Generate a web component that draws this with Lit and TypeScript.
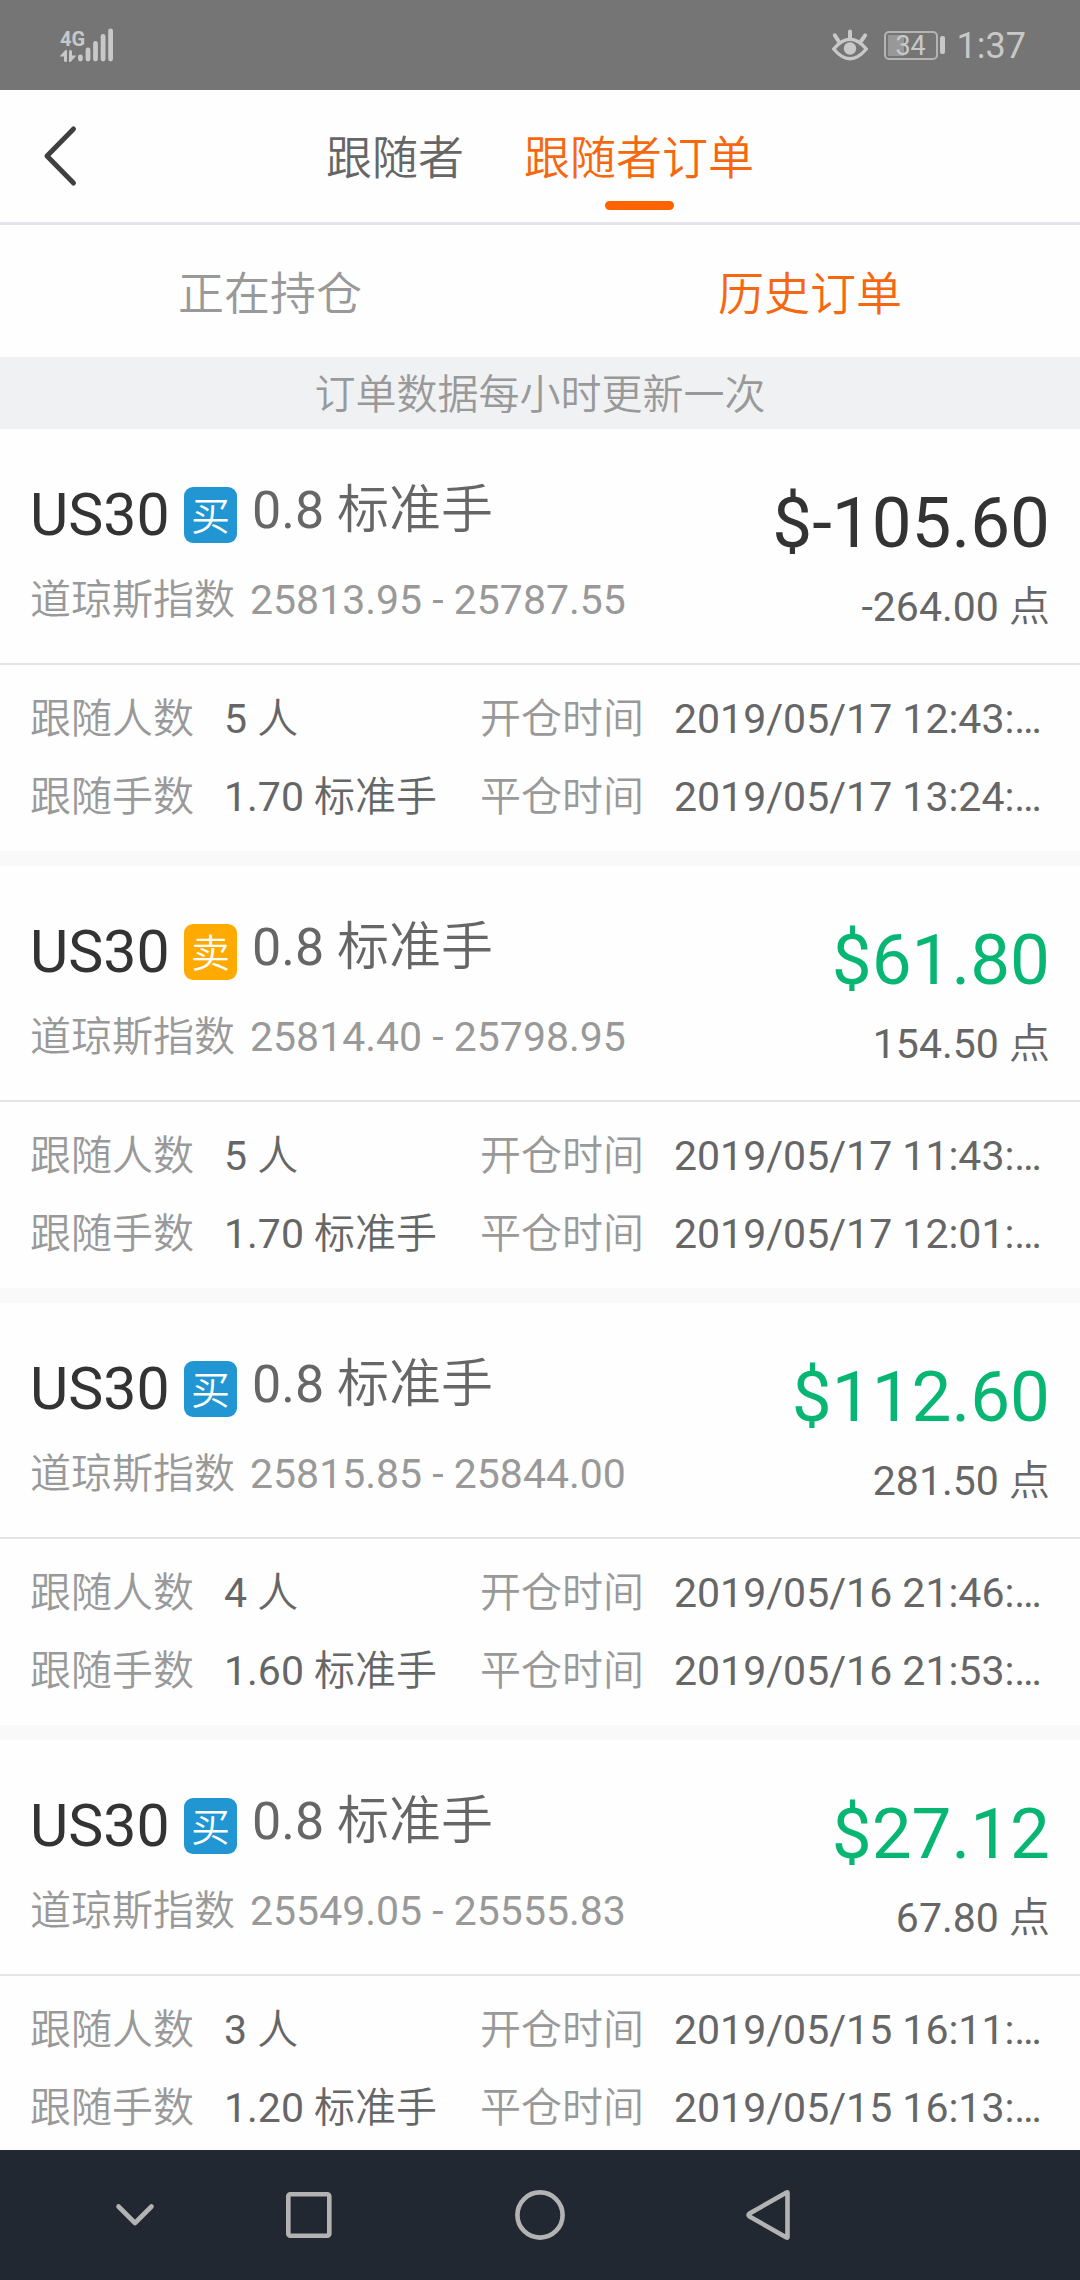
import { LitElement, html, css, svg } from "lit";
import { customElement, property, state } from "lit/decorators.js";
import { classMap } from "lit/directives/class-map.js";

interface Order {
  symbol: string;
  side: "buy" | "sell";
  lots: string;
  name: string;
  range: string;
  profit: string;
  points: string;
  followers: string;
  followLots: string;
  opened: string;
  closed: string;
}

const ORDERS: Order[] = [
  {
    symbol: "US30", side: "buy", lots: "0.8 标准手", name: "道琼斯指数",
    range: "25813.95 - 25787.55", profit: "$-105.60", points: "-264.00 点",
    followers: "5 人", followLots: "1.70 标准手",
    opened: "2019/05/17 12:43:…", closed: "2019/05/17 13:24:…",
  },
  {
    symbol: "US30", side: "sell", lots: "0.8 标准手", name: "道琼斯指数",
    range: "25814.40 - 25798.95", profit: "$61.80", points: "154.50 点",
    followers: "5 人", followLots: "1.70 标准手",
    opened: "2019/05/17 11:43:…", closed: "2019/05/17 12:01:…",
  },
  {
    symbol: "US30", side: "buy", lots: "0.8 标准手", name: "道琼斯指数",
    range: "25815.85 - 25844.00", profit: "$112.60", points: "281.50 点",
    followers: "4 人", followLots: "1.60 标准手",
    opened: "2019/05/16 21:46:…", closed: "2019/05/16 21:53:…",
  },
  {
    symbol: "US30", side: "buy", lots: "0.8 标准手", name: "道琼斯指数",
    range: "25549.05 - 25555.83", profit: "$27.12", points: "67.80 点",
    followers: "3 人", followLots: "1.20 标准手",
    opened: "2019/05/15 16:11:…", closed: "2019/05/15 16:13:…",
  },
];

@customElement("status-bar")
export class StatusBar extends LitElement {
  static styles = css`
    :host {
      display: flex;
      align-items: center;
      height: 90px;
      padding: 0 54px 0 60px;
      box-sizing: border-box;
      background: #757575;
      color: #c8c8c8;
    }
    .network {
      display: flex;
      align-items: flex-end;
      gap: 1px;
      margin-right: auto;
    }
    .generation {
      display: flex;
      flex-direction: column;
      gap: 2px;
      width: 17px;
    }
    .label {
      font: 700 20px/18px "Liberation Sans Narrow", Roboto, sans-serif;
    }
    .icon {
      display: block;
      fill: currentColor;
    }
    .eye {
      margin-right: 16px;
    }
    .battery {
      display: flex;
      align-items: center;
      gap: 2px;
      margin-right: 12px;
    }
    .cell {
      box-sizing: border-box;
      width: 54px;
      height: 29px;
      padding: 2px;
      border: 2px solid #b4b4b4;
      border-radius: 5px;
      font-size: 27px;
      line-height: 22px;
      text-align: center;
      background: linear-gradient(90deg, #989898 34%, transparent 34%) content-box;
    }
    .tip {
      width: 5px;
      height: 18px;
      border-radius: 2px;
      background: currentColor;
    }
    .time {
      padding-top: 2px;
      font-size: 36px;
      line-height: 44px;
    }
  `;

  render() {
    return html`
      <div class="network">
        <div class="generation">
          <span class="label">4G</span>
          <svg class="icon" width="17" height="12" viewBox="0 0 17 12">
            <path d="M0 6 5 0.6Q7 -1 7 1V10.500Q7 12 5.500 12Q4 12 4 10.500V6.500H1Q-0.500 6.500 0 6Z"></path>
            <path d="M16 6 11 11.400Q9 13 9 11V1.500Q9 0 10.500 0Q12 0 12 1.500V5.500H15.500Q16.500 5.500 16 6Z"></path>
          </svg>
        </div>
        <svg class="icon" width="35" height="34" viewBox="0 0 35 34">
          <rect x="0" y="26.500" width="4.800" height="7" rx="2.400"></rect>
          <rect x="7.600" y="19.500" width="4.800" height="14" rx="2.400"></rect>
          <rect x="15.100" y="13" width="4.800" height="20.500" rx="2.400"></rect>
          <rect x="22.700" y="6" width="4.800" height="27.500" rx="2.400"></rect>
          <rect x="30.200" y="0.400" width="4.800" height="33.100" rx="2.400"></rect>
        </svg>
      </div>
      <svg class="icon eye" width="36" height="32" viewBox="0 0 36 32">
        <g fill="none" stroke="currentColor" stroke-linecap="round">
          <path d="M1.700 20Q18 0.600 34.300 20Q18 39.400 1.700 20Z" stroke-width="3.400" stroke-linejoin="round"></path>
          <path d="M18 2.500V9M2.800 6.300 6.300 11.800M33.200 6.300 29.300 11.800" stroke-width="4"></path>
        </g>
        <circle cx="18" cy="19.500" r="6.200"></circle>
      </svg>
      <div class="battery">
        <div class="cell">34</div>
        <div class="tip"></div>
      </div>
      <div class="time">1:37</div>
    `;
  }
}

@customElement("order-card")
export class OrderCard extends LitElement {
  @property({ attribute: false }) order!: Order;

  static styles = css`
    :host {
      display: block;
      background: #fefefe;
      color: #666;
      font-size: 41px;
      line-height: 48px;
      white-space: nowrap;
    }
    .summary {
      display: flex;
      justify-content: space-between;
      align-items: flex-start;
      padding: 56px 30px 32px;
      border-bottom: 2px solid #e4e4e6;
    }
    .title {
      display: grid;
      grid-template-columns: 139px 53px auto;
      column-gap: 15px;
      align-items: center;
      margin-bottom: 31px;
    }
    .symbol {
      margin: 0;
      font-size: 59px;
      line-height: 60px;
      font-weight: 400;
      color: #333;
    }
    .side {
      box-sizing: border-box;
      height: 56px;
      border-radius: 9px;
      font-size: 39px;
      font-weight: 300;
      line-height: 60px;
      text-align: center;
      color: #fff;
    }
    .buy {
      background: #2196d3;
    }
    .sell {
      background: #ffaa00;
    }
    .lots {
      align-self: start;
      font-size: 52px;
      line-height: 52px;
    }
    .instrument {
      display: flex;
      gap: 15px;
      color: #999;
    }
    .name {
      font-weight: 300;
    }
    .result {
      text-align: right;
    }
    .profit {
      margin-bottom: 22px;
      font-size: 71px;
      line-height: 76px;
      color: #08b674;
    }
    .loss {
      color: #333;
    }
    .details {
      display: grid;
      grid-template-columns: 450fr 570fr;
      row-gap: 30px;
      margin: 0;
      padding: 30px;
    }
    .field {
      display: flex;
      gap: 30px;
    }
    .field dt {
      font-weight: 300;
      color: #999;
    }
    .field dd {
      margin: 0;
    }
  `;

  private field(label: string, value: string) {
    return html`<div class="field"><dt>${label}</dt><dd>${value}</dd></div>`;
  }

  render() {
    const o = this.order;
    return html`
      <article>
        <div class="summary">
          <div>
            <div class="title">
              <h2 class="symbol">${o.symbol}</h2>
              <span class=${classMap({ side: true, [o.side]: true })}>${o.side === "buy" ? "买" : "卖"}</span>
              <span class="lots">${o.lots}</span>
            </div>
            <div class="instrument"><span class="name">${o.name}</span><span>${o.range}</span></div>
          </div>
          <div class="result">
            <div class=${classMap({ profit: true, loss: o.profit.includes("-") })}>${o.profit}</div>
            <div>${o.points}</div>
          </div>
        </div>
        <dl class="details">
          ${this.field("跟随人数", o.followers)}
          ${this.field("开仓时间", o.opened)}
          ${this.field("跟随手数", o.followLots)}
          ${this.field("平仓时间", o.closed)}
        </dl>
      </article>
    `;
  }
}

@customElement("system-nav")
export class SystemNav extends LitElement {
  static styles = css`
    :host {
      display: grid;
      grid-template-columns: 48fr 174fr 174fr 288fr 174fr 222fr;
      height: 130px;
      background: #212832;
    }
    .key {
      display: flex;
      align-items: center;
      justify-content: center;
      padding: 0;
      border: 0;
      background: none;
      color: #b3b3b3;
    }
    .first {
      grid-column-start: 2;
    }
    .glyph {
      fill: none;
      stroke: currentColor;
      stroke-width: 4.6;
      stroke-linecap: round;
      stroke-linejoin: round;
    }
  `;

  render() {
    const keys = [
      { label: "隐藏", shape: svg`<path d="M9.500 17.500 26 34 42.500 17.500"></path>` },
      { label: "最近任务", shape: svg`<rect x="5.300" y="5.300" width="41" height="41.400" rx="2"></rect>` },
      { label: "主屏幕", shape: svg`<circle cx="26" cy="26" r="22.600"></circle>` },
      { label: "返回", shape: svg`<path d="M42.500 3.700V48.300Q42.500 49 41.500 48.500L4.500 27.500Q2.500 26 4.500 24.500L41.500 3.500Q42.500 3 42.500 3.700Z"></path>` },
    ];
    return keys.map(
      (k, i) => html`
        <button class=${classMap({ key: true, first: i === 0 })} aria-label=${k.label}>
          <svg class="glyph" width="52" height="52" viewBox="0 0 52 52">${k.shape}</svg>
        </button>
      `,
    );
  }
}

@customElement("app-root")
export class AppRoot extends LitElement {
  @state() private page = 1;
  @state() private filter = 1;

  static styles = css`
    :host {
      display: flex;
      flex-direction: column;
      height: 100vh;
      background: #fefefe;
      font-family: Roboto, "Noto Sans CJK SC DemiLight", "Noto Sans CJK SC Light", "Noto Sans CJK SC", sans-serif;
    }
    .top {
      display: grid;
      grid-template-columns: 120px 1fr 120px;
      height: 132px;
      border-bottom: 3px solid #e4e4ea;
    }
    button {
      padding: 0;
      border: 0;
      background: none;
      font: inherit;
      cursor: pointer;
    }
    .back {
      display: flex;
      align-items: center;
      justify-content: center;
      color: #404040;
    }
    .chevron {
      fill: none;
      stroke: currentColor;
      stroke-width: 5;
      stroke-linecap: round;
      stroke-linejoin: round;
    }
    .pages {
      display: flex;
      justify-content: center;
      gap: 60px;
      font-size: 46px;
      font-weight: 300;
      line-height: 48px;
    }
    .page {
      display: flex;
      flex-direction: column;
      align-items: center;
      justify-content: flex-end;
      gap: 19px;
      padding-bottom: 12px;
      color: #666;
    }
    .page::after {
      content: "";
      width: 69px;
      height: 9px;
      border-radius: 5px;
    }
    .page.active::after {
      background: #ff6200;
    }
    .filters {
      display: grid;
      grid-template-columns: 1fr 1fr;
      height: 132px;
      font-size: 46px;
      font-weight: 300;
    }
    .filter {
      padding-bottom: 2px;
      color: #999;
    }
    .page.active,
    .filter.active {
      color: #f5680f;
    }
    .notice {
      margin: 0;
      padding: 14px 0 10px;
      background: #f0f1f3;
      color: #999;
      font-size: 41px;
      font-weight: 300;
      line-height: 48px;
      text-align: center;
    }
    .orders {
      flex: 1;
      min-height: 0;
      display: flex;
      flex-direction: column;
      gap: 15px;
      overflow-y: auto;
      scrollbar-width: none;
      background: #f9f9f9;
    }
    .order {
      flex: none;
    }
  `;

  render() {
    return html`
      <status-bar></status-bar>
      <header class="top">
        <button class="back" aria-label="返回">
          <svg class="chevron" width="60" height="64" viewBox="0 0 60 64">
            <path d="M43.500 5 17 32 43.500 59"></path>
          </svg>
        </button>
        <nav class="pages">
          ${["跟随者", "跟随者订单"].map(
            (t, i) => html`
              <button class=${classMap({ page: true, active: this.page === i })} @click=${() => (this.page = i)}>${t}</button>
            `,
          )}
        </nav>
      </header>
      <nav class="filters">
        ${["正在持仓", "历史订单"].map(
          (t, i) => html`
            <button class=${classMap({ filter: true, active: this.filter === i })} @click=${() => (this.filter = i)}>${t}</button>
          `,
        )}
      </nav>
      <p class="notice">订单数据每小时更新一次</p>
      <main class="orders">
        ${ORDERS.map((o) => html`<order-card class="order" .order=${o}></order-card>`)}
      </main>
      <system-nav></system-nav>
    `;
  }
}
